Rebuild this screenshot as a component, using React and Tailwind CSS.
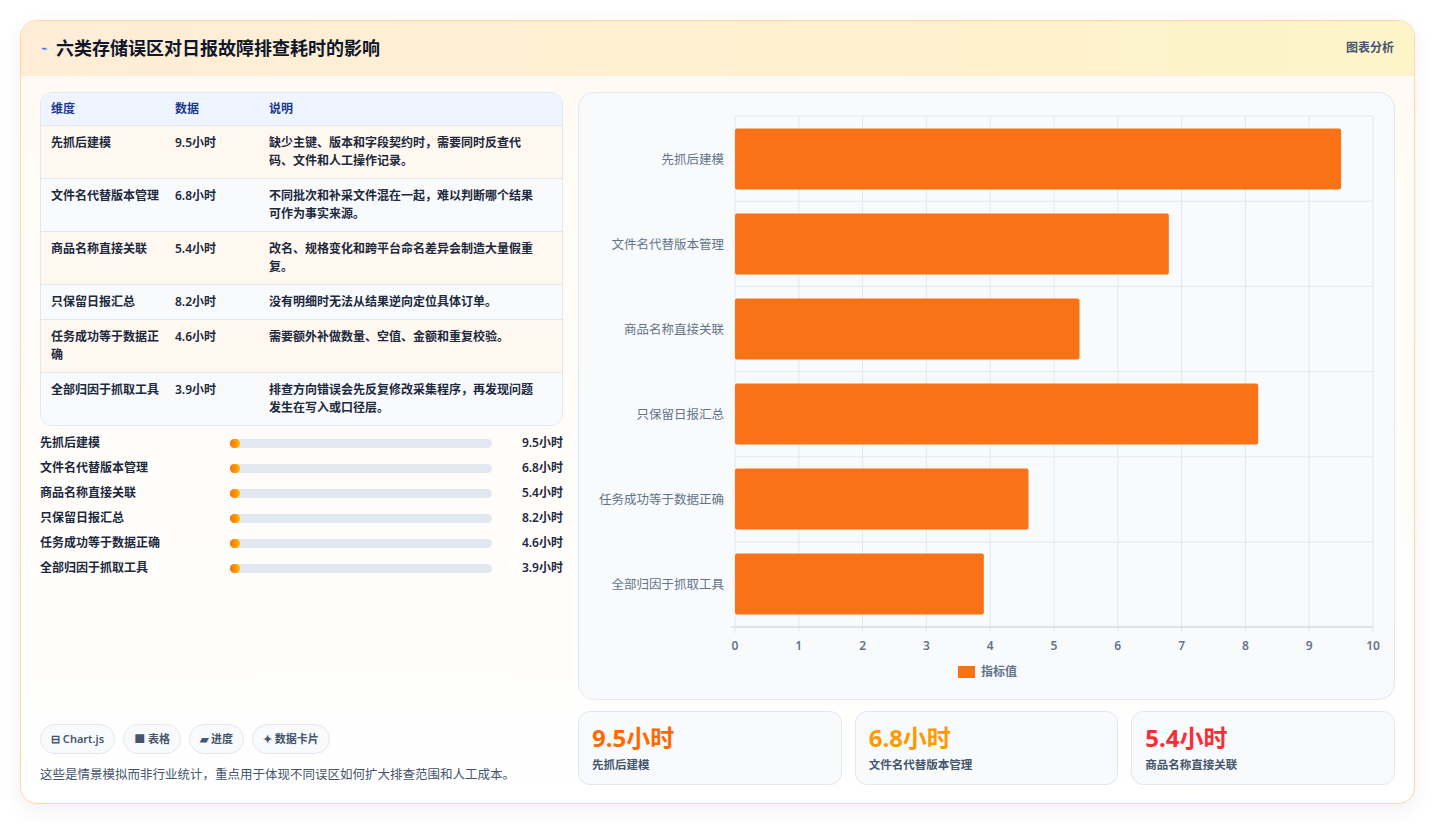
import React from "react";

const rows = [
  { name: "先抓后建模", v: 9.5, desc: "缺少主键、版本和字段契约时，需要同时反查代码、文件和人工操作记录。" },
  { name: "文件名代替版本管理", v: 6.8, desc: "不同批次和补采文件混在一起，难以判断哪个结果可作为事实来源。" },
  { name: "商品名称直接关联", v: 5.4, desc: "改名、规格变化和跨平台命名差异会制造大量假重复。" },
  { name: "只保留日报汇总", v: 8.2, desc: "没有明细时无法从结果逆向定位具体订单。" },
  { name: "任务成功等于数据正确", v: 4.6, desc: "需要额外补做数量、空值、金额和重复校验。" },
  { name: "全部归因于抓取工具", v: 3.9, desc: "排查方向错误会先反复修改采集程序，再发现问题发生在写入或口径层。" },
];

const Chart = () => {
  const x0 = 156, x1 = 794, y0 = 23, y1 = 534;
  const step = (x1 - x0) / 10;
  return (
    <svg width="815" height="606" className="block">
      {Array.from({ length: 11 }).map((_, i) => (
        <line key={i} x1={x0 + i * step} x2={x0 + i * step} y1={y0} y2={y1 + 6} stroke="#e2e8f0" />
      ))}
      {Array.from({ length: 7 }).map((_, i) => (
        <line key={i} x1={x0} x2={x1} y1={y0 + i * 85.2} y2={y0 + i * 85.2} stroke="#e2e8f0" />
      ))}
      <line x1={x0 - 4} x2={x1} y1={y1} y2={y1} stroke="#cbd5e1" />
      {rows.map((r, i) => {
        const cy = 66 + i * 85;
        return (
          <g key={r.name}>
            <rect x={x0} y={cy - 30.5} width={r.v * step} height="61" rx="2" fill="#f97316" />
            <text x={x0 - 11} y={cy + 4.5} textAnchor="end" fontSize="12.5" fill="#64748b">{r.name}</text>
          </g>
        );
      })}
      {Array.from({ length: 11 }).map((_, i) => (
        <text key={i} x={x0 + i * step} y="557" textAnchor="middle" fontSize="12" fontWeight="600" fill="#64748b">{i}</text>
      ))}
      <rect x="379" y="573" width="17" height="12" fill="#f97316" />
      <text x="402" y="583" fontSize="12" fontWeight="600" fill="#64748b">指标值</text>
    </svg>
  );
};

const App = () => {
  return (
    <div className="min-h-[824px] bg-white p-5 pb-5" style={{ fontFamily: '"Noto Sans", "Noto Sans CJK SC", sans-serif' }}>
      <div className="rounded-2xl border border-orange-200 overflow-hidden shadow-[0_6px_20px_rgba(0,0,0,0.06)] bg-gradient-to-b from-[#fffaf3] to-white">
        <div className="h-[55px] flex items-center justify-between px-5 bg-gradient-to-r from-[#ffedd8] to-[#fdf4c8] border-b border-orange-100">
          <div className="flex items-center gap-2">
            <span className="text-blue-600 text-[11px]">⌁</span>
            <span className="text-[18px] font-bold text-slate-900">六类存储误区对日报故障排查耗时的影响</span>
          </div>
          <span className="text-[12px] font-semibold text-slate-600">图表分析</span>
        </div>
        <div className="flex gap-[15px] px-[19px] pt-[16px] pb-[18px]">
          <div className="w-[524px] flex flex-col">
            <div className="rounded-xl border border-slate-200 overflow-hidden text-[12px] text-slate-800">
              <div className="grid grid-cols-[124px_94px_1fr] bg-[#eef5ff] h-[33px] items-center px-[10px] font-semibold text-blue-900 border-b border-slate-200">
                <span>维度</span><span>数据</span><span>说明</span>
              </div>
              {rows.map((r, i) => (
                <div key={r.name} className={"grid grid-cols-[124px_94px_1fr] px-[10px] py-[8px] leading-[18px] border-b border-slate-200 last:border-b-0 " + (i % 2 ? "bg-[#f8fafc]" : "bg-[#fff8f0]")}>
                  <span className="font-semibold pr-3">{r.name}</span>
                  <span className="font-semibold">{r.v}小时</span>
                  <span className="font-semibold pr-2">{r.desc}</span>
                </div>
              ))}
            </div>
            <div className="mt-[8px] flex flex-col gap-[7px]">
              {rows.map((r) => (
                <div key={r.name} className="flex items-center h-[18px] text-[12px] font-semibold text-slate-800">
                  <span className="w-[190px]">{r.name}</span>
                  <div className="w-[262px] h-[9px] rounded-full bg-slate-200 relative">
                    <div className="absolute left-0 top-0 h-[9px] w-[10px] rounded-full bg-gradient-to-r from-orange-500 to-amber-400" />
                  </div>
                  <span className="ml-auto">{r.v}小时</span>
                </div>
              ))}
            </div>
            <div className="mt-auto">
              <div className="flex gap-[8px] text-[11px] font-semibold text-slate-600">
                <span className="px-[10px] py-[6px] rounded-full border border-slate-200 bg-slate-50">⊟ Chart.js</span>
                <span className="px-[10px] py-[6px] rounded-full border border-slate-200 bg-slate-50">■ 表格</span>
                <span className="px-[10px] py-[6px] rounded-full border border-slate-200 bg-slate-50">▰ 进度</span>
                <span className="px-[10px] py-[6px] rounded-full border border-slate-200 bg-slate-50">✦ 数据卡片</span>
              </div>
              <p className="mt-[12px] text-[12.5px] text-slate-600">这些是情景模拟而非行业统计，重点用于体现不同误区如何扩大排查范围和人工成本。</p>
            </div>
          </div>
          <div className="flex-1 flex flex-col gap-[11px]">
            <div className="rounded-2xl border border-slate-200 bg-[#f8fafc] h-[608px]">
              <Chart />
            </div>
            <div className="grid grid-cols-3 gap-[13px]">
              {[
                ["9.5小时", "先抓后建模", "text-orange-500"],
                ["6.8小时", "文件名代替版本管理", "text-amber-500"],
                ["5.4小时", "商品名称直接关联", "text-red-500"],
              ].map(([v, l, c]) => (
                <div key={l} className="h-[74px] rounded-xl border border-slate-200 bg-[#f8fafc] px-[13px] pt-[10px]">
                  <div className={"text-[24px] font-bold leading-[32px] " + c}>{v}</div>
                  <div className="text-[11.5px] font-semibold text-slate-600 mt-[2px]">{l}</div>
                </div>
              ))}
            </div>
          </div>
        </div>
      </div>
    </div>
  );
};

export default App;
